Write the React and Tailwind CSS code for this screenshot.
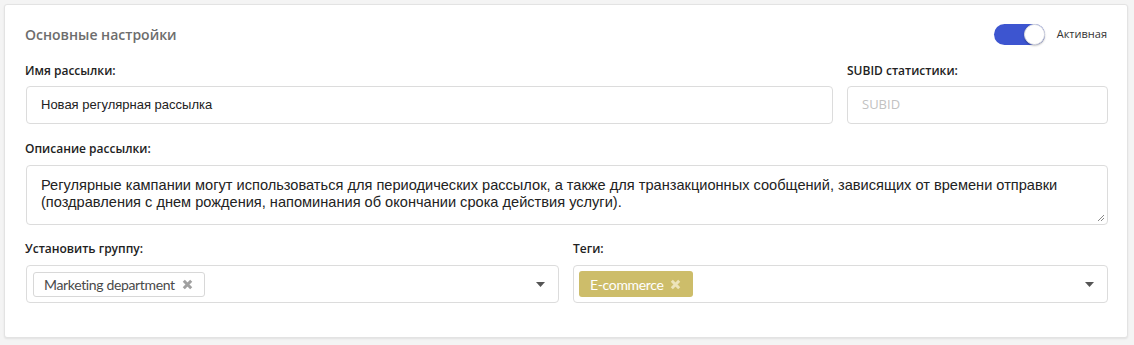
import React from "react";

function Caret() {
  return (
    <svg width="9" height="5" viewBox="0 0 9 5" className="shrink-0">
      <path d="M0 0 L9 0 L4.5 5 Z" fill="#555" />
    </svg>
  );
}

function XIcon({ color }) {
  return (
    <svg width="11" height="11" viewBox="0 0 11 11" className="shrink-0">
      <path d="M1.8 1.8 L9.2 9.2 M9.2 1.8 L1.8 9.2" stroke={color} strokeWidth="3" strokeLinecap="butt" />
    </svg>
  );
}

const labelCls = "text-[12px] font-semibold text-[#222] font-['Open_Sans',sans-serif] leading-[16px]";

export default function App() {
  return (
    <div className="w-[1134px] h-[345px] bg-[#f4f4f4] pt-[4px] pl-[4px] pr-[6px]">
      <div className="h-[334px] bg-white border border-[#e3e3e3] rounded-[3px] shadow-[0_1px_2px_rgba(0,0,0,0.08)] pl-[20px] pr-[19px] pt-[16px]">
        <div className="flex items-center justify-between h-[26px]">
          <div className="text-[14px] font-semibold text-[#6d6d6d] font-['Open_Sans',sans-serif]">
            Основные настройки
          </div>
          <div className="flex items-center gap-[12px] pr-[1px]">
            <div className="w-[51px] h-[21px] rounded-full bg-[#3d55d0] relative">
              <div className="absolute right-0 top-0 w-[21px] h-[21px] rounded-full bg-white border border-[#e2e2e2] shadow-[0_1px_2px_rgba(0,0,0,0.25)]" />
            </div>
            <span className="text-[11px] text-[#333] font-['Open_Sans',sans-serif]">Активная</span>
          </div>
        </div>

        <div className="flex gap-[14px] mt-[16px]">
          <div className="flex-1 flex flex-col">
            <div className={labelCls}>Имя рассылки:</div>
            <div className="mt-[7px] ml-[1px] h-[38px] border border-[#dcdcdc] rounded-[4px] flex items-center px-[14px] text-[13px] text-[#222] font-['Liberation_Sans',sans-serif]">
              Новая регулярная рассылка
            </div>
          </div>
          <div className="w-[261px] flex flex-col">
            <div className={labelCls}>SUBID статистики:</div>
            <div className="mt-[7px] h-[38px] border border-[#dcdcdc] rounded-[4px] flex items-center px-[14px] text-[13px] text-[#c2c2c2] font-['Open_Sans',sans-serif]">
              SUBID
            </div>
          </div>
        </div>

        <div className="mt-[17px]">
          <div className={labelCls}>Описание рассылки:</div>
          <div className="mt-[8px] ml-[1px] h-[60px] border border-[#dcdcdc] rounded-[4px] pl-[14px] pr-[10px] pt-[11px] text-[14.6px] leading-[17px] text-[#222] font-['Liberation_Sans',sans-serif] relative">
            Регулярные кампании могут использоваться для периодических рассылок, а также для транзакционных сообщений, зависящих от времени отправки (поздравления с днем рождения, напоминания об окончании срока действия услуги).
            <svg width="8" height="8" viewBox="0 0 8 8" className="absolute right-[2px] bottom-[2px]">
              <path d="M7 1 L1 7 M7 4 L4 7" stroke="#888" strokeWidth="1" />
            </svg>
          </div>
        </div>

        <div className="flex gap-[14px] mt-[16px]">
          <div className="flex-1 flex flex-col">
            <div className={labelCls}>Установить группу:</div>
            <div className="mt-[8px] ml-[1px] h-[38px] border border-[#dcdcdc] rounded-[4px] flex items-center pl-[6px] pr-[13px]">
              <div className="h-[25px] border border-[#d8d8d8] rounded-[3px] flex items-center gap-[7px] pl-[10px] pr-[11px] text-[14px] tracking-[-0.35px] text-[#4a4a4a] font-['Lato',sans-serif]">
                Marketing department
                <XIcon color="#a0a0a0" />
              </div>
              <div className="flex-1" />
              <Caret />
            </div>
          </div>
          <div className="w-[535px] flex flex-col">
            <div className={labelCls}>Теги:</div>
            <div className="mt-[8px] h-[38px] border border-[#dcdcdc] rounded-[4px] flex items-center pl-[5px] pr-[13px]">
              <div className="h-[26px] rounded-[3px] bg-[#cdbd6a] flex items-center gap-[7px] pl-[11px] pr-[12px] text-[14px] tracking-[-0.35px] text-white font-['Lato',sans-serif]">
                E-commerce
                <XIcon color="#ede4bb" />
              </div>
              <div className="flex-1" />
              <Caret />
            </div>
          </div>
        </div>
      </div>
    </div>
  );
}
